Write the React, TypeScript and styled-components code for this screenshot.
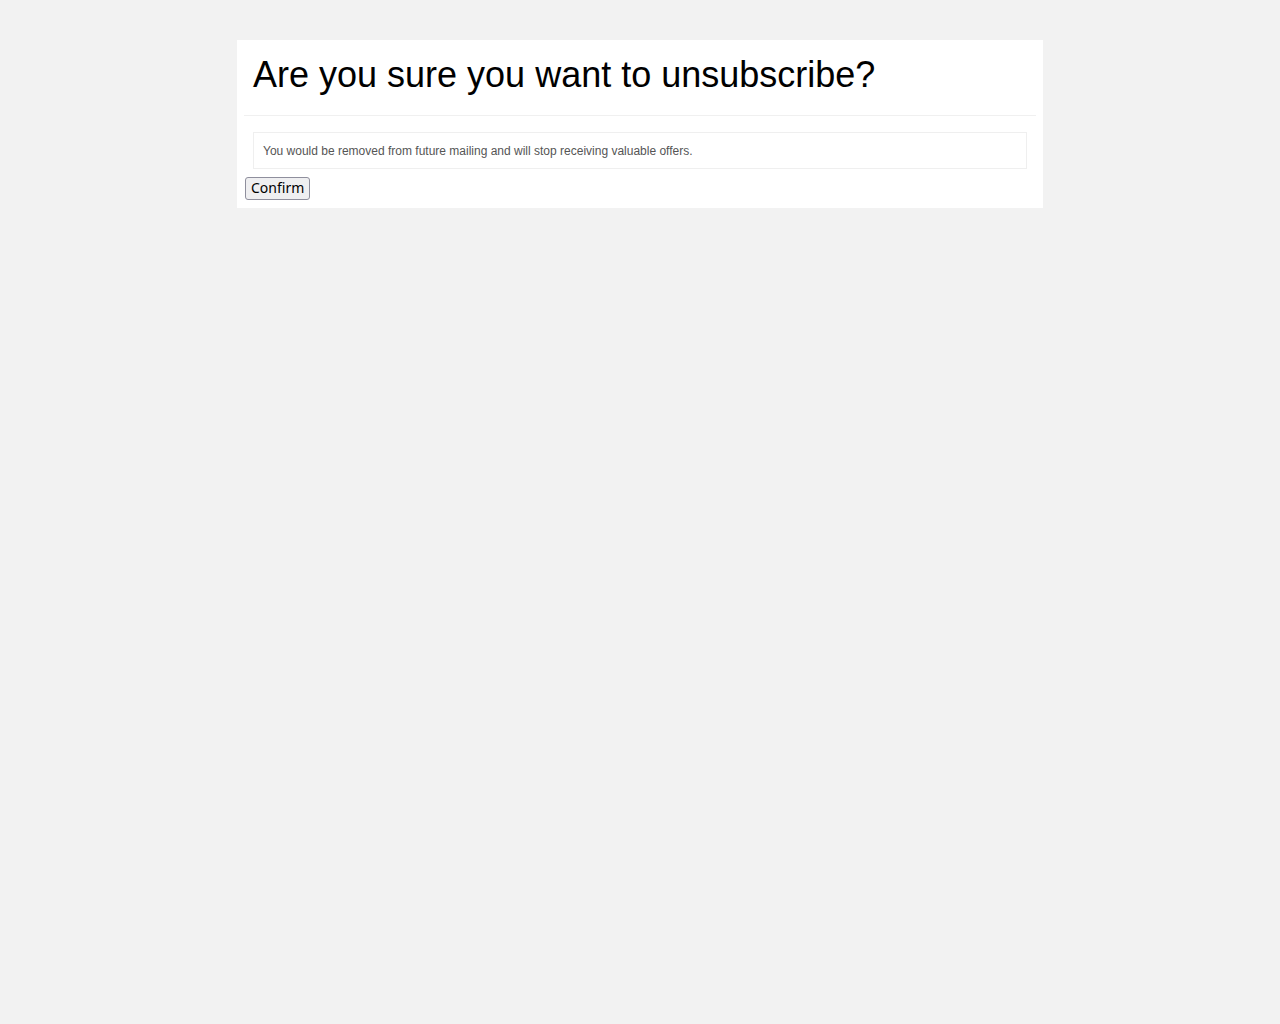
import React from "react";
import styled, { createGlobalStyle } from "styled-components";

const Global = createGlobalStyle`
  html, body { margin: 0; padding: 0; background: #f2f2f2; }
  body { font-family: "Liberation Sans", Arial, sans-serif; }
`;

const Page = styled.div`
  padding-top: 40px;
`;

const Card = styled.div`
  width: 806px;
  margin: 0 auto;
  background: #ffffff;
  padding: 8px;
  box-sizing: border-box;
  display: flex;
  flex-direction: column;
  align-items: flex-start;
`;

const Header = styled.div`
  align-self: stretch;
  margin: 0 -1px 0 -1px;
  padding: 6px 9px 20px 9px;
  border-bottom: 1px solid #f0f0f0;
`;

const Title = styled.h1`
  margin: 0;
  font-family: "Liberation Sans", Arial, sans-serif;
  font-weight: 400;
  font-size: 36px;
  line-height: 41px;
  color: #000;
`;

const Notice = styled.div`
  align-self: stretch;
  margin: 16px 8px 0 8px;
  padding: 10px 9px 9px 9px;
  border: 1px solid #efefef;
  font-size: 12px;
  line-height: 16px;
  color: #555555;
`;

const ConfirmButton = styled.button`
  margin-top: 8px;
  font-family: "Noto Sans", "DejaVu Sans", sans-serif;
  font-size: 14px;
  line-height: 19px;
  color: #000;
  padding: 0 5px 2px 5px;
  background: #efeff1;
  border: 1px solid #8f8f9d;
  border-radius: 3px;
  cursor: pointer;
`;

export default function App() {
  return (
    <>
      <Global />
      <Page>
        <Card>
          <Header>
            <Title>Are you sure you want to unsubscribe?</Title>
          </Header>
          <Notice>You would be removed from future mailing and will stop receiving valuable offers.</Notice>
          <ConfirmButton type="button">Confirm</ConfirmButton>
        </Card>
      </Page>
    </>
  );
}
